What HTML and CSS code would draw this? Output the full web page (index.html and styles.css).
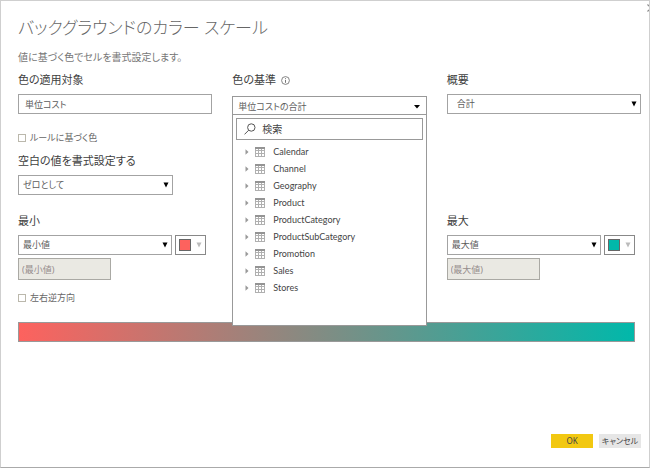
FILE: index.html
```html
<!DOCTYPE html>
<html lang="ja">
<head>
<meta charset="utf-8">
<title>バックグラウンドのカラー スケール</title>
<link rel="stylesheet" href="styles.css">
</head>
<body>
<svg class="defs" aria-hidden="true">
  <symbol id="table" viewBox="0 0 10 10">
    <rect x="0.5" y="0.5" width="9" height="9" fill="#fff" stroke="#b0b0b0"/>
    <path d="M0 3.5H10M0 6.5H10M3.5 2V10M6.5 2V10" stroke="#b0b0b0"/>
    <path d="M0 1H10" stroke="#949494" stroke-width="2"/>
  </symbol>
  <symbol id="expand" viewBox="0 0 4 6"><path d="M0.5 0.3V5.7L3.5 3Z" fill="#999"/></symbol>
  <symbol id="down" viewBox="0 0 6 6"><path d="M0.5 0.5H5.5L3 5.5Z"/></symbol>
</svg>
<main class="dialog">
  <button class="close" aria-label="閉じる"><svg viewBox="0 0 8 8"><path d="M0.5 0.5L7.5 7.5M7.5 0.5L0.5 7.5" stroke="#888" stroke-width="1.2"/></svg></button>
  <h1>バックグラウンドのカラー スケール</h1>
  <p class="intro">値に基づく色でセルを書式設定します。</p>

  <section class="columns">
    <div class="field">
      <label class="heading" for="target">色の適用対象</label>
      <input class="box" id="target" type="text" value="単位コスト">
    </div>
    <div class="field">
      <div class="heading" id="basis">色の基準
        <svg class="info" viewBox="0 0 9 9"><circle cx="4.5" cy="4.5" r="3.9" fill="none" stroke="#666" stroke-width="0.8"/><path d="M4.5 4V6.8M4.5 2.2V3.2" stroke="#666" stroke-width="0.9"/></svg>
      </div>
      <div class="combo">
        <button class="combo-value" aria-labelledby="basis" aria-expanded="true">単位コストの合計
          <svg viewBox="0 0 6 4"><path d="M0 0H6L3 3.5Z"/></svg>
        </button>
        <div class="popup">
          <label class="search">
            <svg viewBox="0 0 12 12" fill="none" stroke="#555"><circle cx="7.3" cy="4.5" r="3.7"/><path d="M4.7 7.2L0.5 11.4"/></svg>
            <input type="text" placeholder="検索" aria-label="検索">
          </label>
          <ul class="tree">
            <li><svg class="arrow"><use href="#expand"/></svg><svg class="grid"><use href="#table"/></svg>Calendar</li>
            <li><svg class="arrow"><use href="#expand"/></svg><svg class="grid"><use href="#table"/></svg>Channel</li>
            <li><svg class="arrow"><use href="#expand"/></svg><svg class="grid"><use href="#table"/></svg>Geography</li>
            <li><svg class="arrow"><use href="#expand"/></svg><svg class="grid"><use href="#table"/></svg>Product</li>
            <li><svg class="arrow"><use href="#expand"/></svg><svg class="grid"><use href="#table"/></svg>ProductCategory</li>
            <li><svg class="arrow"><use href="#expand"/></svg><svg class="grid"><use href="#table"/></svg>ProductSubCategory</li>
            <li><svg class="arrow"><use href="#expand"/></svg><svg class="grid"><use href="#table"/></svg>Promotion</li>
            <li><svg class="arrow"><use href="#expand"/></svg><svg class="grid"><use href="#table"/></svg>Sales</li>
            <li><svg class="arrow"><use href="#expand"/></svg><svg class="grid"><use href="#table"/></svg>Stores</li>
          </ul>
        </div>
      </div>
    </div>
    <div class="field">
      <label class="heading" for="summary">概要</label>
      <div class="select indented"><select class="box" id="summary"><option>合計</option></select><svg><use href="#down"/></svg></div>
    </div>
  </section>

  <label class="check"><input type="checkbox">ルールに基づく色</label>

  <section class="columns">
    <div class="field">
      <label class="heading" for="blank">空白の値を書式設定する</label>
      <div class="select short"><select class="box" id="blank"><option>ゼロとして</option></select><svg><use href="#down"/></svg></div>
    </div>
  </section>

  <section class="columns limits">
    <div class="field">
      <label class="heading" for="min">最小</label>
      <div class="pair">
        <div class="select"><select class="box" id="min"><option>最小値</option></select><svg><use href="#down"/></svg></div>
        <button class="color" aria-label="最小の色"><span class="swatch low"></span><svg><use href="#down"/></svg></button>
      </div>
      <input class="box value" type="text" placeholder="(最小値)" aria-label="最小値" disabled>
    </div>
    <div class="field last">
      <label class="heading" for="max">最大</label>
      <div class="pair">
        <div class="select"><select class="box" id="max"><option>最大値</option></select><svg><use href="#down"/></svg></div>
        <button class="color" aria-label="最大の色"><span class="swatch high"></span><svg><use href="#down"/></svg></button>
      </div>
      <input class="box value" type="text" placeholder="(最大値)" aria-label="最大値" disabled>
    </div>
  </section>

  <label class="check"><input type="checkbox">左右逆方向</label>
  <div class="scale"></div>

  <footer>
    <button class="ok">OK</button>
    <button>キャンセル</button>
  </footer>
</main>
</body>
</html>
```
FILE: styles.css
```css
* { box-sizing: border-box; }

body {
  margin: 0;
  background: #fff;
  color: #5c5c5c;
  font: 9px/12px "Noto Sans", "Noto Sans CJK JP", sans-serif;
  font-feature-settings: "palt";
}

svg { display: block; flex: none; }
.defs { position: absolute; width: 0; height: 0; }

button, input, select {
  margin: 0;
  padding: 0;
  border: 0;
  border-radius: 0;
  color: inherit;
  font: inherit;
  font-feature-settings: inherit;
}

.dialog {
  position: relative;
  display: flex;
  flex-direction: column;
  min-height: 100vh;
  padding: 14px 8px 19px 17px;
  border: 1px solid #cfcfcf;
  border-bottom-color: #aaa;
  overflow: hidden;
}

.close {
  position: absolute;
  top: 3px;
  right: -6px;
  width: 8px;
  height: 8px;
  background: none;
}

h1 {
  margin: 0;
  color: #666;
  font-size: 17px;
  font-weight: 300;
  line-height: 26px;
}

.intro {
  margin: 8px 0 0;
  color: #777;
  font-size: 10px;
  line-height: 16px;
}

.columns {
  display: grid;
  grid-template-columns: repeat(3, minmax(0, 1fr));
  column-gap: 20px;
  margin-top: 7px;
}

.heading {
  display: flex;
  align-items: center;
  gap: 5px;
  height: 16px;
  margin-bottom: 6px;
  color: #404040;
  font-size: 11px;
  line-height: 16px;
}

.info { width: 9px; height: 9px; }

.box {
  display: block;
  width: 100%;
  height: 20px;
  padding: 0 6px;
  border: 1px solid #a3a3a3;
  background: #fff;
}

.select { position: relative; flex: 1; }
.select .box { appearance: none; padding: 0 4px; }
.select.indented .box { padding-left: 9px; }
.select.short { width: 80%; }
.select svg {
  position: absolute;
  top: 7px;
  right: 4px;
  width: 6px;
  height: 6px;
  fill: #000;
  pointer-events: none;
}

.combo { position: relative; margin-top: 8px; }

.combo-value {
  display: flex;
  align-items: center;
  justify-content: space-between;
  width: 100%;
  height: 20px;
  padding: 2px 6px 0 5px;
  border: 1px solid #999;
  background: #fff;
}

.combo-value svg { width: 6px; height: 4px; fill: #000; }

.popup {
  position: absolute;
  z-index: 1;
  top: 18px;
  left: 0;
  right: 0;
  height: 212px;
  padding: 3px;
  border: 1px solid #999;
  background: #fff;
}

.search {
  display: flex;
  align-items: center;
  gap: 6px;
  height: 22px;
  padding-left: 7px;
  border: 1px solid #999;
}

.search svg { width: 12px; height: 12px; }
.search input { min-width: 0; flex: 1; background: none; font-size: 10px; }
.search input::placeholder { color: #444; }

.tree { margin: 3px 0 0; padding: 0; list-style: none; }

.tree li {
  display: flex;
  align-items: center;
  height: 17px;
  padding-left: 9px;
  color: #444;
  font-family: Lato, "Noto Sans", sans-serif;
}

.arrow { width: 4px; height: 6px; margin-right: 6px; }
.grid { width: 10px; height: 10px; margin-right: 8px; }

.check {
  display: flex;
  align-items: center;
  gap: 4px;
  height: 12px;
  margin-top: 16px;
  color: #666;
}

.check input {
  appearance: none;
  width: 8px;
  height: 8px;
  border: 1px solid #bbb8ac;
  background: #fff;
}

.check + .columns { margin-top: 9px; }
.limits { margin-top: 18px; }
.last { grid-column: 3; }

.pair { display: flex; gap: 3px; margin: 0 6px 3px 0; }

.color {
  display: flex;
  align-items: center;
  justify-content: space-between;
  width: 31px;
  height: 20px;
  padding: 0 3px;
  border: 1px solid #888;
  background: #fff;
}

.color svg { width: 6px; height: 6px; fill: #bbb; }
.swatch { width: 12px; height: 12px; border: 1px solid #666; }
.low { background: #fd625e; }
.high { background: #01b8aa; }

.value {
  width: 48%;
  height: 22px;
  padding: 0 3px;
  border-color: #aaa9a4;
  background: #eae9e3;
}

.value::placeholder { color: #968d8d; }

.limits + .check { margin-top: 12px; }

.scale {
  height: 20px;
  margin: 18px 6px 0 0;
  border: 1px solid #999;
  background: linear-gradient(to right, #fd625e, #01b8aa);
}

footer {
  display: flex;
  justify-content: flex-end;
  gap: 6px;
  margin-top: auto;
}

footer button {
  width: 42px;
  height: 14px;
  background: #e6e6e6;
  color: #444;
  font-size: 8px;
  line-height: 14px;
}

footer .ok { background: #f2c811; }
```
